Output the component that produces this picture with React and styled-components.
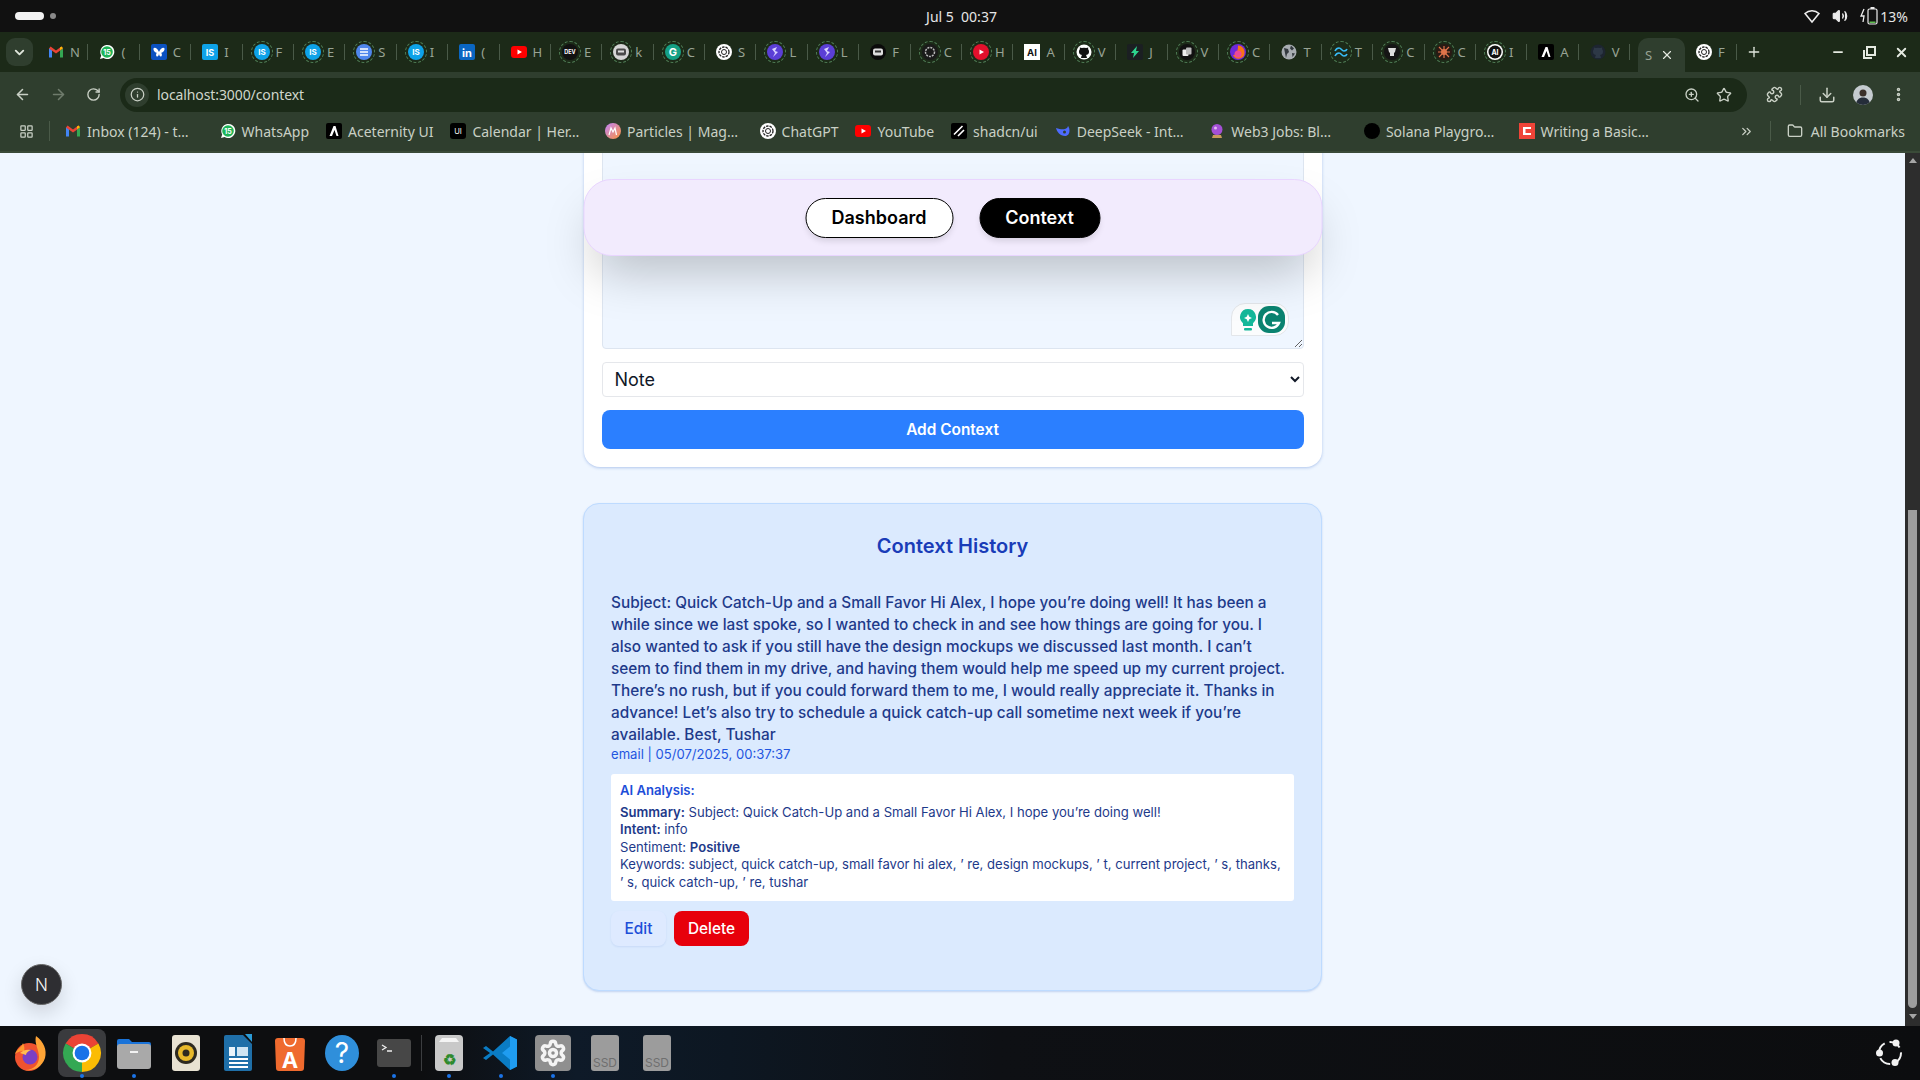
import styled, { createGlobalStyle } from "styled-components";
import {
  ArrowLeft,
  ArrowRight,
  ChevronDown,
  ChevronsRight,
  Download,
  EllipsisVertical,
  Folder,
  Info,
  LayoutGrid,
  Minus,
  Plus,
  Puzzle,
  RotateCw,
  Settings,
  Star,
  Volume2,
  X,
  ZoomIn,
} from "lucide-react";

const GlobalStyle = createGlobalStyle`
  html, body { margin: 0; padding: 0; overflow: hidden; }
  * { box-sizing: border-box; }
  body { font-family: Inter, "Liberation Sans", sans-serif; }
`;

const Screen = styled.div`
  width: 1920px;
  height: 1080px;
  display: flex;
  flex-direction: column;
  overflow: hidden;
  background: #eff6ff;
`;

/* system bar */
const TopBar = styled.div`
  height: 32px;
  flex: none;
  display: grid;
  grid-template-columns: 1fr auto 1fr;
  align-items: center;
  padding: 0 12px 0 15px;
  background: #111111;
  color: #e6e6e6;
  font: 400 14px "Noto Sans", sans-serif;
`;
const Workspaces = styled.div`
  display: flex;
  align-items: center;
  gap: 6px;
`;
const WorkspacePill = styled.span`
  width: 29px;
  height: 8px;
  border-radius: 4px;
  background: #f2f2f2;
`;
const WorkspaceDot = styled.span`
  width: 6px;
  height: 6px;
  border-radius: 50%;
  background: #8a8a8a;
`;
const Tray = styled.div`
  display: flex;
  justify-content: flex-end;
  align-items: center;
  gap: 12px;
`;
const BatteryLevel = styled.span`
  margin-left: -12px;
`;

/* tab strip */
const TabStrip = styled.div`
  height: 40px;
  flex: none;
  display: flex;
  align-items: flex-end;
  background: #1c2a18;
  color: #c9d0c5;
  font: 400 13px "Noto Sans", sans-serif;
`;
const TabMenu = styled.div`
  width: 27px;
  height: 28px;
  margin: 0 4px 6px 6px;
  flex: none;
  display: flex;
  align-items: center;
  justify-content: center;
  border-radius: 9px;
  background: #2f3e2e;
`;
const Tab = styled.div`
  width: 51.4px;
  height: 40px;
  flex: none;
  display: flex;
  align-items: center;
  gap: 6px;
  padding-left: 11px;
  position: relative;
  white-space: nowrap;
  &::after {
    content: "";
    position: absolute;
    right: 0;
    top: 12px;
    height: 16px;
    width: 1px;
    background: #4a5a48;
  }
`;
const FavSlot = styled.span`
  width: 16px;
  height: 16px;
  flex: none;
  display: inline-flex;
  border-radius: 50%;
  outline: ${(p) => (p.$ring ? "1px dashed #4f7d55" : "none")};
  outline-offset: 2px;
`;
const TabLetter = styled.span`
  width: 10px;
  flex: none;
  color: #98a394;
`;
const ActiveTab = styled.div`
  width: 47px;
  height: 34px;
  margin-left: 8px;
  flex: none;
  display: flex;
  align-items: center;
  gap: 5px;
  padding-left: 7px;
  border-radius: 10px 10px 0 0;
  background: #2f3e2e;
`;
const NewTab = styled.div`
  width: 17px;
  height: 40px;
  margin-left: 9px;
  flex: none;
  display: flex;
  align-items: center;
`;
const WindowControls = styled.div`
  height: 40px;
  margin-left: auto;
  padding-right: 11px;
  display: flex;
  align-items: center;
  gap: 17px;
`;

/* address bar */
const Toolbar = styled.div`
  height: 45px;
  flex: none;
  display: flex;
  align-items: center;
  padding: 0 0 0 14px;
  background: #2f3e2e;
  color: #c9d0c5;
`;
const NavIcons = styled.div`
  display: flex;
  align-items: center;
  gap: 19px;
  width: 106px;
`;
const Omnibox = styled.div`
  flex: 1;
  height: 34px;
  display: flex;
  align-items: center;
  padding: 0 15px 0 5px;
  border-radius: 17px;
  background: #1b2a18;
  font: 400 14px "Noto Sans", sans-serif;
`;
const SiteInfo = styled.span`
  width: 24px;
  height: 24px;
  margin-right: 8px;
  display: flex;
  align-items: center;
  justify-content: center;
  border-radius: 50%;
  background: #2f3e2e;
`;
const Url = styled.span`
  color: #cfd6cb;
  letter-spacing: -0.1px;
`;
const OmniboxEnd = styled.div`
  margin-left: auto;
  display: flex;
  align-items: center;
  gap: 16px;
`;
const ToolbarEnd = styled.div`
  width: 173px;
  flex: none;
  display: flex;
  align-items: center;
  padding-left: 19px;
  gap: 17px;
`;
const ToolbarDivider = styled.span`
  width: 1px;
  height: 20px;
  background: #4a5a48;
`;
const Avatar = styled.span`
  width: 20px;
  height: 20px;
  flex: none;
  border-radius: 50%;
  overflow: hidden;
  display: flex;
`;

/* bookmarks */
const BookmarkBar = styled.div`
  height: 36px;
  flex: none;
  display: flex;
  align-items: center;
  padding: 0 15px 6px 19px;
  background: #2f3e2e;
  border-bottom: 2px solid #3a4a38;
  color: #c9d0c5;
  font: 400 14px "Noto Sans", sans-serif;
`;
const BookmarkDivider = styled.span`
  width: 1px;
  height: 20px;
  margin: 0 15px;
  background: #4a5a48;
`;
const BookmarkList = styled.div`
  display: flex;
  align-items: center;
  gap: 17px;
`;
const Bookmark = styled.div`
  display: flex;
  align-items: center;
  gap: 6px;
  white-space: nowrap;
`;
const BookmarkLabel = styled.span`
  width: ${(p) => (p.$clipped ? "115.6px" : "auto")};
`;
const BookmarkEnd = styled.div`
  margin-left: auto;
  display: flex;
  align-items: center;
  gap: 16px;
`;
const AllBookmarks = styled.span`
  margin-left: -8px;
`;

/* page */
const Viewport = styled.div`
  flex: 1;
  min-height: 0;
  display: flex;
  position: relative;
  overflow: hidden;
  background: #eff6ff;
`;
const PageColumn = styled.main`
  flex: 1;
  display: flex;
  flex-direction: column;
  align-items: center;
  justify-content: flex-end;
  gap: 36px;
  padding-bottom: 35px;
  position: relative;
`;
const FormCard = styled.section`
  width: 738px;
  flex: none;
  display: flex;
  flex-direction: column;
  gap: 13px;
  padding: 18px;
  border-radius: 16px;
  background: #ffffff;
  box-shadow: 0 1px 3px rgba(60, 110, 200, 0.35);
`;
const TextareaWrap = styled.div`
  position: relative;
  display: flex;
`;
const ContextInput = styled.textarea`
  width: 100%;
  height: 300px;
  border: 1px solid #dde5f0;
  border-radius: 4px;
  background: #eff6ff;
  resize: vertical;
  outline: none;
`;
const GrammarlyBadge = styled.div`
  position: absolute;
  right: 15px;
  bottom: 13px;
  width: 58px;
  height: 33px;
  display: flex;
  align-items: center;
  justify-content: space-between;
  padding: 0 3px 0 6px;
  border: 1px solid #e3e6ea;
  border-radius: 14px 14px 14px 0;
  background: #fbfcfd;
`;
const TypeSelect = styled.select`
  width: 100%;
  height: 35px;
  padding: 0 6px 0 8px;
  border: 1px solid #e5e7eb;
  border-radius: 4px;
  background: #ffffff;
  color: #111827;
  font: 400 18px Inter, sans-serif;
  outline: none;
`;
const SubmitButton = styled.button`
  height: 39px;
  border: none;
  border-radius: 8px;
  background: #2b7fff;
  color: #ffffff;
  font: 600 15.4px Inter, sans-serif;
`;

const NavPill = styled.nav`
  position: absolute;
  z-index: 10;
  top: 26px;
  left: 50%;
  transform: translateX(-50%);
  width: 739px;
  height: 77px;
  display: flex;
  align-items: center;
  justify-content: center;
  gap: 26px;
  padding-top: 1px;
  border: 1px solid #e9d5ff;
  border-radius: 28px;
  background: #f2ebfd;
  box-shadow: 0 25px 50px -12px rgba(0, 0, 0, 0.25);
`;
const NavButton = styled.button`
  width: ${(p) => p.$width}px;
  height: 40px;
  padding-bottom: 2px;
  border: 1px solid #000000;
  border-radius: 20px;
  background: ${(p) => (p.$active ? "#000000" : "#ffffff")};
  color: ${(p) => (p.$active ? "#ffffff" : "#000000")};
  font: 600 18px Inter, sans-serif;
  box-shadow: 0 4px 6px -1px rgba(0, 0, 0, 0.12);
`;

const HistoryCard = styled.section`
  width: 739px;
  flex: none;
  padding: 28px 27px 44px;
  border: 1px solid #bedbff;
  border-radius: 16px;
  background: #dbeafe;
  box-shadow: 0 1px 2px rgba(60, 110, 200, 0.25);
`;
const HistoryTitle = styled.h2`
  margin: 0 0 32px;
  text-align: center;
  color: #193cb8;
  font: 600 20px/28px Inter, sans-serif;
`;
const Message = styled.p`
  margin: 0;
  color: #1e3a8a;
  font: 500 15.35px/22px Inter, sans-serif;
`;
const Meta = styled.div`
  margin-bottom: 12px;
  color: #1f55e0;
  font: 400 13.1px/16px Inter, sans-serif;
`;
const AnalysisBox = styled.div`
  padding: 8px 9px 9.4px;
  border-radius: 3px;
  background: #ffffff;
  color: #1e3a8a;
  font: 400 13.1px/17.6px Inter, sans-serif;
  strong { font-weight: 600; }
`;
const AnalysisTitle = styled.div`
  margin-bottom: 4px;
  color: #1d4ed8;
  font-weight: 600;
`;
const Actions = styled.div`
  display: flex;
  gap: 8px;
  margin-top: 10px;
`;
const EditButton = styled.button`
  width: 55px;
  height: 35px;
  border: none;
  border-radius: 8px;
  background: #deeaff;
  color: #1d4ed8;
  font: 500 15.4px Inter, sans-serif;
  box-shadow: 0 1px 2px rgba(60, 110, 200, 0.12);
`;
const DeleteButton = styled.button`
  width: 75px;
  height: 35px;
  border: none;
  border-radius: 8px;
  background: #e7000b;
  color: #ffffff;
  font: 500 15.4px Inter, sans-serif;
`;

const DevBadge = styled.div`
  position: absolute;
  left: 21px;
  bottom: 21px;
  width: 41px;
  height: 41px;
  display: flex;
  align-items: center;
  justify-content: center;
  border: 1px solid #666;
  border-radius: 50%;
  background: #2e2e32;
  color: #f5f5f5;
  font: 300 17px Inter, sans-serif;
  box-shadow: 0 8px 20px rgba(0, 0, 0, 0.14);
`;

const Scrollbar = styled.div`
  width: 15px;
  flex: none;
  display: flex;
  flex-direction: column;
  align-items: center;
  background: #2d2d2d;
`;
const ScrollArrow = styled.span`
  width: 0;
  height: 0;
  border-left: 4px solid transparent;
  border-right: 4px solid transparent;
  border-bottom: ${(p) => (p.$down ? "none" : "5px solid #a6a6a6")};
  border-top: ${(p) => (p.$down ? "5px solid #a6a6a6" : "none")};
  margin: ${(p) => (p.$down ? "6px 0 0" : "5px 0 0")};
`;
const ScrollTrack = styled.div`
  flex: none;
  height: 845px;
  width: 100%;
  display: flex;
  justify-content: center;
  align-items: flex-end;
`;
const ScrollThumb = styled.div`
  width: 9px;
  height: 498px;
  border-radius: 0 0 5px 5px;
  background: #9d9d9d;
`;

/* dock */
const Dock = styled.div`
  height: 54px;
  flex: none;
  display: flex;
  align-items: center;
  padding-left: 4px;
  position: relative;
  background: linear-gradient(90deg, #0d0e10 0, #0d0e10 22%, #0e1a28 30%, #0d1722 38%, #0e1014 52%, #0c0d0f 100%);
`;
const DockSlot = styled.div`
  width: 52px;
  height: 54px;
  flex: none;
  display: flex;
  align-items: center;
  justify-content: center;
  position: relative;
  &::before {
    content: "";
    position: absolute;
    top: 3px;
    left: 2px;
    width: 48px;
    height: 48px;
    border-radius: 8px;
    background: ${(p) => (p.$focused ? "#3a3b3e" : "transparent")};
  }
  svg { position: relative; }
`;
const RunDot = styled.span`
  position: absolute;
  bottom: 2px;
  left: 50%;
  margin-left: -2px;
  width: 4px;
  height: 4px;
  border-radius: 50%;
  background: #1a73e8;
`;
const DockDivider = styled.span`
  width: 1px;
  height: 36px;
  margin: 0 1px;
  background: #3b3d40;
`;
const DockEnd = styled.div`
  margin-left: auto;
  padding-right: 16px;
  display: flex;
  align-items: center;
`;

const fontSvg = { fontFamily: "Inter, sans-serif", fontWeight: 700, textAnchor: "middle" };

const Favicon = ({ kind }) => {
  const box = { width: 16, height: 16, viewBox: "0 0 16 16" };
  switch (kind) {
    case "gmail":
      return (
        <svg {...box}>
          <path d="M1 13.5V4l3 2.2v7.3z" fill="#4285f4" />
          <path d="M12 13.5V6.2L15 4v9.5z" fill="#34a853" />
          <path d="M1 4.5 8 9.6l7-5.1-1.6-2L8 6.4 2.6 2.5z" fill="#ea4335" />
          <path d="M12 6.2 15 4l-1.6-1.5L12 3.5z" fill="#fbbc04" />
        </svg>
      );
    case "whatsapp":
      return (
        <svg {...box}>
          <path d="M1 15l1.2-3.6A7 7 0 1 1 4.6 13.9z" fill="#fff" />
          <circle cx="8" cy="8" r="5.8" fill="#1fb457" />
          <text x="8" y="10.6" fontSize="7" fill="#fff" style={fontSvg}>15</text>
        </svg>
      );
    case "butterfly":
      return (
        <svg {...box}>
          <rect width="16" height="16" rx="2" fill="#0b51c1" />
          <path d="M8 8C6 3 3 3 2.5 4.5S4 9 6 8.8C4.5 10 5 13 6.5 12.5S8 10 8 8c0 2 0 4 1.5 4.5S11.5 10 10 8.8C12 9 14 6 13.5 4.5S10 3 8 8z" fill="#fff" />
        </svg>
      );
    case "is":
      return (
        <svg {...box}>
          <rect width="16" height="16" rx="2" fill="#0ea2e8" />
          <text x="8" y="11.5" fontSize="9" fill="#fff" style={fontSvg}>IS</text>
        </svg>
      );
    case "isc":
      return (
        <svg {...box}>
          <circle cx="8" cy="8" r="8" fill="#0ea2e8" />
          <text x="8" y="11" fontSize="8" fill="#fff" style={fontSvg}>IS</text>
        </svg>
      );
    case "docs":
      return (
        <svg {...box}>
          <circle cx="8" cy="8" r="8" fill="#4f86ec" />
          <path d="M4 5h8M4 8h8M4 11h8" stroke="#fff" strokeWidth="1.5" />
        </svg>
      );
    case "linkedin":
      return (
        <svg {...box}>
          <rect width="16" height="16" rx="2" fill="#0a66c2" />
          <text x="8" y="12.5" fontSize="11" fill="#fff" style={fontSvg}>in</text>
        </svg>
      );
    case "youtube":
      return (
        <svg {...box}>
          <rect y="2" width="16" height="12" rx="3" fill="#f00" />
          <path d="M6.5 5.5 11 8l-4.5 2.5z" fill="#fff" />
        </svg>
      );
    case "youtubec":
      return (
        <svg {...box}>
          <circle cx="8" cy="8" r="8" fill="#e3102c" />
          <path d="M6.5 5.5 11 8l-4.5 2.5z" fill="#fff" />
        </svg>
      );
    case "dev":
      return (
        <svg {...box}>
          <circle cx="8" cy="8" r="8" fill="#111" />
          <text x="8" y="10" fontSize="5.5" fill="#fff" style={fontSvg}>DEV</text>
        </svg>
      );
    case "kit":
      return (
        <svg {...box}>
          <circle cx="8" cy="8" r="8" fill="#d5d5d5" />
          <rect x="3" y="4.5" width="10" height="7" rx="2" fill="#4a4a4a" />
          <rect x="5" y="6.5" width="6" height="2" fill="#ddd" />
        </svg>
      );
    case "black":
      return (
        <svg {...box}>
          <circle cx="8" cy="8" r="8" fill="#0a0a0a" />
          <rect x="3" y="4.5" width="10" height="7" rx="2" fill="#ddd" />
          <rect x="5" y="6.5" width="6" height="2" fill="#333" />
        </svg>
      );
    case "grammarly":
      return (
        <svg {...box}>
          <circle cx="8" cy="8" r="8" fill="#15a085" />
          <text x="8" y="12" fontSize="11" fill="#fff" style={fontSvg}>G</text>
        </svg>
      );
    case "openai":
      return (
        <svg {...box}>
          <circle cx="8" cy="8" r="8" fill="#fff" />
          <circle cx="8" cy="8" r="5" fill="none" stroke="#222" strokeWidth="1.3" strokeDasharray="2.5 1" />
          <circle cx="8" cy="8" r="2.5" fill="none" stroke="#222" strokeWidth="1" />
        </svg>
      );
    case "purple":
      return (
        <svg {...box}>
          <circle cx="8" cy="8" r="8" fill="#5b3fd6" />
          <path d="M5 5 10 3 8 7l3 1-5 5 2-4z" fill="#d9d2ff" />
        </svg>
      );
    case "grayc":
      return (
        <svg {...box}>
          <circle cx="8" cy="8" r="8" fill="#1a1a1a" />
          <circle cx="8" cy="8" r="4.5" fill="none" stroke="#bbb" strokeWidth="1.5" strokeDasharray="2 1" />
        </svg>
      );
    case "ai":
      return (
        <svg {...box}>
          <rect width="16" height="16" fill="#fff" />
          <text x="8" y="11.5" fontSize="9.5" fill="#111" style={fontSvg}>AI</text>
        </svg>
      );
    case "aic":
      return (
        <svg {...box}>
          <circle cx="8" cy="8" r="8" fill="#fff" />
          <circle cx="8" cy="8" r="6.5" fill="#111" />
          <text x="8" y="10.5" fontSize="7" fill="#fff" style={fontSvg}>AI</text>
        </svg>
      );
    case "github":
    case "githubdark":
      return (
        <svg {...box}>
          <circle cx="8" cy="8" r="7.5" fill={kind === "github" ? "#fff" : "#1d2530"} />
          <path d="M5 14c.4-2 .6-2.5 1-3-2.5-.5-3.2-2-3-3.8.1-.8.4-1.4.9-1.9L3.8 3.5l2 .6a6 6 0 0 1 4.4 0l2-.6-.1 1.8c.5.5.8 1.1.9 1.9.2 1.8-.5 3.3-3 3.8.4.5.6 1 1 3z" fill={kind === "github" ? "#111" : "#2d3846"} />
        </svg>
      );
    case "bolt":
      return (
        <svg {...box}>
          <rect width="16" height="16" rx="2" fill="#1b1f22" />
          <path d="M10 2 4 9h3l-1 5 6-7H9z" fill="#2dd48f" />
        </svg>
      );
    case "cards":
      return (
        <svg {...box}>
          <circle cx="8" cy="8" r="8" fill="#111" />
          <rect x="3.5" y="5.5" width="6" height="6.5" rx="1" fill="#eee" />
          <rect x="7" y="3.5" width="5.5" height="7" rx="1" fill="#bbb" />
        </svg>
      );
    case "flame":
      return (
        <svg {...box}>
          <circle cx="8" cy="8" r="8" fill="#6d28d9" />
          <path d="M8 1.5c4 0 6.5 3 6.5 6.5A6 6 0 0 1 3 11c2 0 5-1 5-9.5z" fill="#f97316" />
          <circle cx="8" cy="10" r="3.5" fill="#ec4899" />
        </svg>
      );
    case "globe":
      return (
        <svg {...box}>
          <circle cx="8" cy="8" r="7.5" fill="#a8adb2" />
          <path d="M3 4l4 1 1 3-2 2-1 4zM10 1.5l3 3-2 2-2-2zM11 9l3 .5-2.5 3.5z" fill="#33393f" />
        </svg>
      );
    case "tailwind":
      return (
        <svg {...box}>
          <path d="M2 7c1-2 2.2-3 4-3 2.5 0 2.5 3 5 3 1.5 0 2.5-.7 3-2" fill="none" stroke="#38bdf8" strokeWidth="1.6" />
          <path d="M2 12c1-2 2.2-3 4-3 2.5 0 2.5 3 5 3 1.5 0 2.5-.7 3-2" fill="none" stroke="#38bdf8" strokeWidth="1.6" />
        </svg>
      );
    case "skull":
      return (
        <svg {...box}>
          <circle cx="8" cy="8" r="8" fill="#151515" />
          <path d="M4 4h8l-1 4-1 1v3H6V9L5 8z" fill="#ddd" />
        </svg>
      );
    case "spider":
      return (
        <svg {...box}>
          <circle cx="8" cy="8" r="8" fill="#2a1a14" />
          <path d="M3 3l10 10M13 3 3 13M2 8h12M8 2v12" stroke="#e0734a" strokeWidth="1.2" />
          <circle cx="8" cy="8" r="3" fill="#e0734a" />
        </svg>
      );
    case "acet":
      return (
        <svg {...box}>
          <rect width="16" height="16" rx="2" fill="#000" />
          <path d="M3.5 13 7.5 3h2l3 10h-2L8.5 7 6 13z" fill="#fff" />
        </svg>
      );
    case "ui":
      return (
        <svg {...box}>
          <rect width="16" height="16" rx="3" fill="#000" />
          <text x="8" y="11" fontSize="7.5" fill="#fff" style={{ ...fontSvg, fontWeight: 400 }}>UI</text>
        </svg>
      );
    case "particles":
      return (
        <svg {...box}>
          <defs>
            <linearGradient id="mg" x1="0" y1="0" x2="1" y2="1">
              <stop offset="0" stopColor="#c084fc" />
              <stop offset="1" stopColor="#fb923c" />
            </linearGradient>
          </defs>
          <circle cx="8" cy="8" r="8" fill="url(#mg)" />
          <path d="M4 12 6 5l2 4 2-4 1.5 7" fill="none" stroke="#fff" strokeWidth="1.2" />
        </svg>
      );
    case "shadcn":
      return (
        <svg {...box}>
          <rect width="16" height="16" rx="2" fill="#000" />
          <path d="M13 7 7 13M11.5 3 3 11.5" stroke="#fff" strokeWidth="1.6" />
        </svg>
      );
    case "deepseek":
      return (
        <svg {...box}>
          <path d="M1 5c1 4 4 8 9 8 3 0 4.5-2.5 4.5-5.5S13 3 13 3c-.5 2-1.5 2.5-3 3-2 .5-5 .5-9-1z" fill="#4d6bfe" />
          <circle cx="9.5" cy="9" r="1.5" fill="#2f3e2e" />
        </svg>
      );
    case "web3":
      return (
        <svg {...box}>
          <circle cx="8" cy="6.5" r="5.5" fill="#a44fd6" />
          <circle cx="6.5" cy="5" r="1.5" fill="#e3b7f5" />
          <path d="M4 12h8l1 3H3z" fill="#c89a5b" />
        </svg>
      );
    case "solana":
      return (
        <svg {...box}>
          <circle cx="8" cy="8" r="8" fill="#000" />
        </svg>
      );
    case "writing":
      return (
        <svg {...box}>
          <rect width="16" height="16" fill="#f04438" />
          <path d="M12 4H4v8h8v-2H6.5V6H12z" fill="#fff" />
        </svg>
      );
    default:
      return null;
  }
};

const tabs = [
  ["gmail", "N"], ["whatsapp", "("], ["butterfly", "C"], ["is", "I"],
  ["isc", "F", true], ["isc", "E", true], ["docs", "S", true], ["isc", "I", true],
  ["linkedin", "("], ["youtube", "H"], ["dev", "E", true], ["kit", "k", true],
  ["grammarly", "C", true], ["openai", "S"], ["purple", "L", true], ["purple", "L", true],
  ["black", "F"], ["grayc", "C", true], ["youtubec", "H", true], ["ai", "A"],
  ["github", "V", true], ["bolt", "J"], ["cards", "V", true], ["flame", "C", true],
  ["globe", "T"], ["tailwind", "T", true], ["skull", "C", true], ["spider", "C", true],
  ["aic", "I", true], ["acet", "A"], ["githubdark", "V"],
];

const bookmarks = [
  ["gmail", "Inbox (124) - t…", true], ["whatsapp", "WhatsApp"], ["acet", "Aceternity UI"],
  ["ui", "Calendar | Her…", true], ["particles", "Particles | Mag…", true], ["openai", "ChatGPT"],
  ["youtube", "YouTube"], ["shadcn", "shadcn/ui"], ["deepseek", "DeepSeek - Int…", true],
  ["web3", "Web3 Jobs: Bl…", true], ["solana", "Solana Playgro…", true], ["writing", "Writing a Basic…", true],
];

const dockBox = { width: 42, height: 42, viewBox: "0 0 42 42" };

const DockIcon = ({ kind }) => {
  switch (kind) {
    case "firefox":
      return (
        <svg {...dockBox}>
          <circle cx="20" cy="25" r="14" fill="#f0532f" />
          <path d="M27 4c8 6 11 14 9 22-3 10-13 13-20 12 9 0 14-6 14-13 0-8-5-13-3-21z" fill="#ffa436" />
          <path d="M14 11c-1 4-6 6-8 11 2-2 6-3 9-3 1-3 0-5-1-8z" fill="#ff9a2e" />
          <circle cx="21" cy="25" r="7.5" fill="#7b3fc4" />
          <path d="M11 21c3-3 7-4 11-3-3 1-5 3-5 5z" fill="#ffbd4f" />
        </svg>
      );
    case "chrome":
      return (
        <svg {...dockBox} viewBox="0 0 40 40">
          <path d="M20 20 4.4 11A18 18 0 0 1 35.6 11Z" fill="#ea4335" />
          <path d="M20 20 35.6 11A18 18 0 0 1 20 38Z" fill="#fbbc04" />
          <path d="M20 20 20 38A18 18 0 0 1 4.4 11Z" fill="#34a853" />
          <circle cx="20" cy="20" r="9" fill="#fff" />
          <circle cx="20" cy="20" r="7" fill="#1a73e8" />
        </svg>
      );
    case "files":
      return (
        <svg {...dockBox}>
          <path d="M4 9a2 2 0 0 1 2-2h10l3 3h17a2 2 0 0 1 2 2v6H4z" fill="#1a73d8" />
          <rect x="4" y="12" width="34" height="25" rx="3" fill="#a9a9a9" />
          <rect x="17" y="19" width="8" height="2" fill="#f2f2f2" />
        </svg>
      );
    case "rhythmbox":
      return (
        <svg {...dockBox}>
          <rect x="7" y="3" width="28" height="36" rx="3" fill="#e8e2d2" />
          <circle cx="21" cy="21" r="11" fill="#2e2a20" />
          <circle cx="21" cy="21" r="8" fill="#e8b92a" />
          <circle cx="21" cy="21" r="3.5" fill="#2e2a20" />
        </svg>
      );
    case "writer":
      return (
        <svg {...dockBox}>
          <path d="M7 5a2 2 0 0 1 2-2h17l9 9v25a2 2 0 0 1-2 2H9a2 2 0 0 1-2-2z" fill="#1f6fa8" />
          <path d="M28 2h7v8z" fill="#2b9bd6" />
          <rect x="12" y="15" width="6" height="9" fill="#e8f3fa" />
          <rect x="20" y="15" width="11" height="9" fill="#cfe5f3" />
          <path d="M12 27h19M12 31h19M12 35h19" stroke="#fff" strokeWidth="1.8" />
        </svg>
      );
    case "store":
      return (
        <svg {...dockBox}>
          <path d="M9 6h24a3 3 0 0 1 3 3l-1 27a3 3 0 0 1-3 3H10a3 3 0 0 1-3-3L6 9a3 3 0 0 1 3-3z" fill="#ef6a2e" />
          <path d="M15 6c0 6 3 8 6 8s6-2 6-8" fill="none" stroke="#fff" strokeWidth="1.5" />
          <text x="21" y="36" fontSize="22" fill="#fff" style={fontSvg}>A</text>
        </svg>
      );
    case "help":
      return (
        <svg {...dockBox}>
          <ellipse cx="21" cy="21" rx="17" ry="18" fill="#2f8fdb" />
          <text x="21" y="31" fontSize="28" fill="#fff" style={{ ...fontSvg, fontWeight: 400 }}>?</text>
        </svg>
      );
    case "terminal":
      return (
        <svg {...dockBox}>
          <rect x="4" y="7" width="34" height="28" rx="3" fill="#474747" />
          <path d="M9 13l4 2.5-4 2.5M14 19h5" fill="none" stroke="#eee" strokeWidth="1.3" />
        </svg>
      );
    case "trash":
      return (
        <svg {...dockBox}>
          <rect x="7" y="3" width="28" height="36" rx="4" fill="#c9c9c9" />
          <path d="M11 10 14 6h14l3 4z" fill="#f4f4f4" />
          <text x="21" y="33" fontSize="15" fill="#2d8a2d" style={fontSvg}>♻</text>
        </svg>
      );
    case "vscode":
      return (
        <svg {...dockBox}>
          <path d="M30 4 37 7.5v27L30 38 13 22.5 6 28l-3-2 7-5-7-5 3-2 7 5.5z" fill="#0a7cc4" />
          <path d="M30 4 37 7.5v27L30 38V27.5L22 21l8-6.5z" fill="#1f9cf0" />
        </svg>
      );
    case "settings":
      return (
        <svg {...dockBox}>
          <rect x="3" y="3" width="36" height="36" rx="4" fill="#8f8f8f" />
          <foreignObject x="7" y="7" width="28" height="28">
            <Settings size={28} color="#f4f4f4" strokeWidth={3} />
          </foreignObject>
        </svg>
      );
    case "ssd":
      return (
        <svg {...dockBox}>
          <rect x="7" y="3" width="28" height="36" rx="3" fill="#9c9c9c" />
          <text x="21" y="35" fontSize="12" fill="#6f6f6f" style={{ ...fontSvg, fontWeight: 400 }}>SSD</text>
        </svg>
      );
    default:
      return null;
  }
};

const GrammarlyBulb = () => (
  <svg width="20" height="24" viewBox="0 0 20 24">
    <path d="M10 1a8 8 0 0 1 5 14.2V18H5v-2.8A8 8 0 0 1 10 1z" fill="#14b89a" />
    <path d="M10 6l1.3 2.7L14 10l-2.7 1.3L10 14l-1.3-2.7L6 10l2.7-1.3z" fill="#fff" />
    <rect x="6" y="20" width="8" height="2.5" rx="1" fill="#14b89a" />
  </svg>
);

const GrammarlyMark = () => (
  <svg width="27" height="27" viewBox="0 0 27 27">
    <rect width="27" height="27" rx="11" fill="#0b8370" />
    <path d="M20 9a8 8 0 1 0 1 8h-7" fill="none" stroke="#fff" strokeWidth="2.4" />
  </svg>
);

const UbuntuLogo = () => (
  <svg width="28" height="28" viewBox="0 0 28 28">
    <circle cx="14" cy="14" r="11" fill="none" stroke="#f2f2f2" strokeWidth="2" strokeDasharray="12 5" />
    <circle cx="3.5" cy="14" r="3.5" fill="#f2f2f2" />
    <circle cx="20" cy="4" r="3.5" fill="#f2f2f2" />
    <circle cx="19" cy="23.5" r="3.5" fill="#f2f2f2" />
  </svg>
);

const WifiGlyph = () => (
  <svg width="16" height="16" viewBox="0 0 16 16">
    <path d="M1 5.5a10 10 0 0 1 14 0L8 14z" fill="none" stroke="#eee" strokeWidth="1.5" />
  </svg>
);

const BatteryGlyph = () => (
  <svg width="20" height="20" viewBox="0 0 20 20">
    <path d="M4 3 1 10h3l-1 6" fill="none" stroke="#eee" strokeWidth="1.3" />
    <rect x="8" y="3" width="9" height="15" rx="1.5" fill="none" stroke="#eee" strokeWidth="1.2" />
    <rect x="10.5" y="1" width="4" height="2" fill="#eee" />
    <rect x="9.5" y="15.5" width="6" height="1.5" fill="#5ec04f" />
  </svg>
);

const ProfilePhoto = () => (
  <svg width="20" height="20" viewBox="0 0 20 20">
    <rect width="20" height="20" fill="#c5cbd0" />
    <circle cx="10" cy="8" r="3.5" fill="#3a2f2a" />
    <path d="M3 20c0-5 3-7.5 7-7.5s7 2.5 7 7.5z" fill="#252d3a" />
  </svg>
);

const MESSAGE =
  "Subject: Quick Catch-Up and a Small Favor Hi Alex, I hope you’re doing well! It has been a while since we last spoke, so I wanted to check in and see how things are going for you. I also wanted to ask if you still have the design mockups we discussed last month. I can’t seem to find them in my drive, and having them would help me speed up my current project. There’s no rush, but if you could forward them to me, I would really appreciate it. Thanks in advance! Let’s also try to schedule a quick catch-up call sometime next week if you’re available. Best, Tushar";

const App = () => {
  return (
    <Screen>
      <GlobalStyle />
      <TopBar>
        <Workspaces>
          <WorkspacePill />
          <WorkspaceDot />
        </Workspaces>
        <span>Jul 5&nbsp;&nbsp;00:37</span>
        <Tray>
          <WifiGlyph />
          <Volume2 size={16} fill="#eee" />
          <BatteryGlyph />
          <BatteryLevel>13%</BatteryLevel>
        </Tray>
      </TopBar>

      <TabStrip>
        <TabMenu>
          <ChevronDown size={15} strokeWidth={3} color="#dfe5db" />
        </TabMenu>
        {tabs.map(([kind, letter, ring], i) => (
          <Tab key={i}>
            <FavSlot $ring={ring}>
              <Favicon kind={kind} />
            </FavSlot>
            <TabLetter>{letter}</TabLetter>
          </Tab>
        ))}
        <ActiveTab>
          <TabLetter>S</TabLetter>
          <X size={14} color="#e4e9e0" />
        </ActiveTab>
        <Tab>
          <FavSlot>
            <Favicon kind="openai" />
          </FavSlot>
          <TabLetter>F</TabLetter>
        </Tab>
        <NewTab>
          <Plus size={16} color="#dfe5db" />
        </NewTab>
        <WindowControls>
          <Minus size={14} strokeWidth={3} color="#e4e9e0" />
          <svg width="15" height="15" viewBox="0 0 15 15">
            <path d="M5 2h8v8H5zM2 5v8h8" fill="none" stroke="#e4e9e0" strokeWidth="2" />
          </svg>
          <X size={15} strokeWidth={3} color="#e4e9e0" />
        </WindowControls>
      </TabStrip>

      <Toolbar>
        <NavIcons>
          <ArrowLeft size={17} strokeWidth={2.2} />
          <ArrowRight size={17} strokeWidth={2.2} color="#6f7c6c" />
          <RotateCw size={15} strokeWidth={2.2} />
        </NavIcons>
        <Omnibox>
          <SiteInfo>
            <Info size={15} />
          </SiteInfo>
          <Url>localhost:3000/context</Url>
          <OmniboxEnd>
            <ZoomIn size={16} />
            <Star size={16} />
          </OmniboxEnd>
        </Omnibox>
        <ToolbarEnd>
          <Puzzle size={17} />
          <ToolbarDivider />
          <Download size={18} />
          <Avatar>
            <ProfilePhoto />
          </Avatar>
          <EllipsisVertical size={17} strokeWidth={3} />
        </ToolbarEnd>
      </Toolbar>

      <BookmarkBar>
        <LayoutGrid size={15} />
        <BookmarkDivider />
        <BookmarkList>
          {bookmarks.map(([kind, label, clipped]) => (
            <Bookmark key={label}>
              <Favicon kind={kind} />
              <BookmarkLabel $clipped={clipped}>{label}</BookmarkLabel>
            </Bookmark>
          ))}
        </BookmarkList>
        <BookmarkEnd>
          <ChevronsRight size={15} />
          <ToolbarDivider />
          <Folder size={16} />
          <AllBookmarks>All Bookmarks</AllBookmarks>
        </BookmarkEnd>
      </BookmarkBar>

      <Viewport>
        <PageColumn>
          <NavPill>
            <NavButton $width={148}>Dashboard</NavButton>
            <NavButton $width={121} $active>Context</NavButton>
          </NavPill>

          <FormCard>
            <TextareaWrap>
              <ContextInput readOnly />
              <GrammarlyBadge>
                <GrammarlyBulb />
                <GrammarlyMark />
              </GrammarlyBadge>
            </TextareaWrap>
            <TypeSelect defaultValue="note">
              <option value="note">Note</option>
            </TypeSelect>
            <SubmitButton>Add Context</SubmitButton>
          </FormCard>

          <HistoryCard>
            <HistoryTitle>Context History</HistoryTitle>
            <Message>{MESSAGE}</Message>
            <Meta>email | 05/07/2025, 00:37:37</Meta>
            <AnalysisBox>
              <AnalysisTitle>AI Analysis:</AnalysisTitle>
              <div>
                <strong>Summary:</strong> Subject: Quick Catch-Up and a Small Favor Hi Alex, I hope you’re doing well!
              </div>
              <div>
                <strong>Intent:</strong> info
              </div>
              <div>
                Sentiment: <strong>Positive</strong>
              </div>
              <div>
                Keywords: subject, quick catch-up, small favor hi alex, ’ re, design mockups, ’ t, current project, ’ s, thanks, ’ s, quick catch-up, ’ re, tushar
              </div>
            </AnalysisBox>
            <Actions>
              <EditButton>Edit</EditButton>
              <DeleteButton>Delete</DeleteButton>
            </Actions>
          </HistoryCard>

          <DevBadge>N</DevBadge>
        </PageColumn>

        <Scrollbar>
          <ScrollArrow />
          <ScrollTrack>
            <ScrollThumb />
          </ScrollTrack>
          <ScrollArrow $down />
        </Scrollbar>
      </Viewport>

      <Dock>
        <DockSlot><DockIcon kind="firefox" /></DockSlot>
        <DockSlot $focused><DockIcon kind="chrome" /><RunDot /></DockSlot>
        <DockSlot><DockIcon kind="files" /><RunDot /></DockSlot>
        <DockSlot><DockIcon kind="rhythmbox" /></DockSlot>
        <DockSlot><DockIcon kind="writer" /></DockSlot>
        <DockSlot><DockIcon kind="store" /></DockSlot>
        <DockSlot><DockIcon kind="help" /></DockSlot>
        <DockSlot><DockIcon kind="terminal" /><RunDot /></DockSlot>
        <DockDivider />
        <DockSlot><DockIcon kind="trash" /><RunDot /></DockSlot>
        <DockSlot><DockIcon kind="vscode" /><RunDot /></DockSlot>
        <DockSlot><DockIcon kind="settings" /><RunDot /></DockSlot>
        <DockSlot><DockIcon kind="ssd" /></DockSlot>
        <DockSlot><DockIcon kind="ssd" /></DockSlot>
        <DockEnd>
          <UbuntuLogo />
        </DockEnd>
      </Dock>
    </Screen>
  );
};

export default App;
